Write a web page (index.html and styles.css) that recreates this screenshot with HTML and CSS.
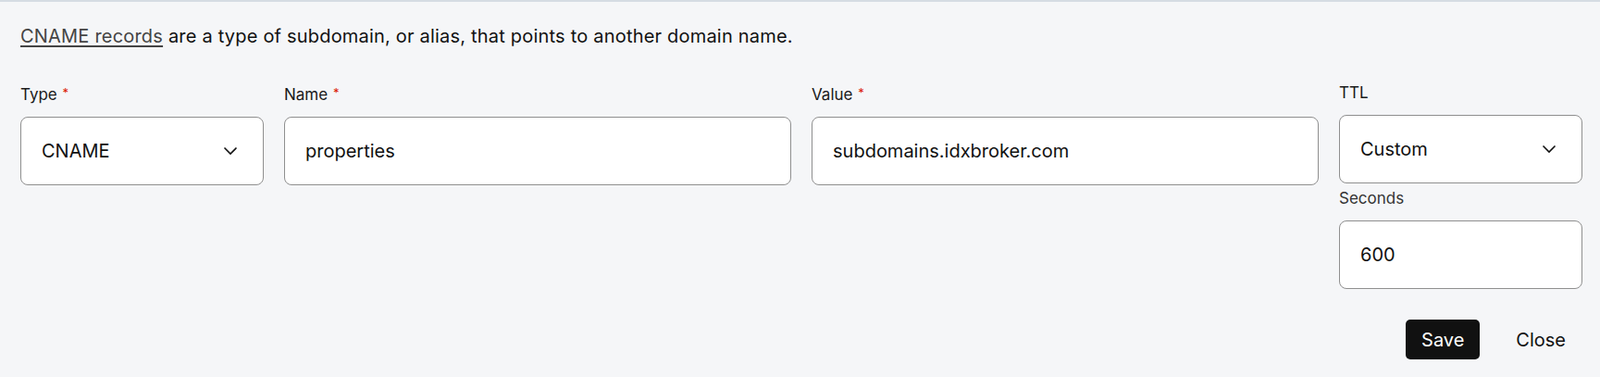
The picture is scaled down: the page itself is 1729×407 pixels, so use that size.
FILE: index.html
```html
<!DOCTYPE html>
<html lang="en">
<head>
  <meta charset="UTF-8" />
  <meta name="viewport" content="width=device-width, initial-scale=1.0"/>
  <title>Edit DNS record</title>
  <link rel="stylesheet" href="styles.css">
</head>
<body>
  <div class="record-form">
    <p class="intro"><a href="#">CNAME records</a> are a type of subdomain, or alias, that points to another domain name.</p>

    <div class="fields">
      <div class="field span-2">
        <label>Type <span class="req">*</span></label>
        <div class="select">
          <span>CNAME</span>
          <svg class="chevron" width="16" height="10" viewBox="0 0 16 10"><path d="M1.5 1.5 L8 8 L14.5 1.5" fill="none" stroke="#111" stroke-width="1.6"/></svg>
        </div>
      </div>

      <div class="field span-4">
        <label>Name <span class="req">*</span></label>
        <div class="input">properties</div>
      </div>

      <div class="field span-4">
        <label>Value <span class="req">*</span></label>
        <div class="input">subdomains.idxbroker.com</div>
      </div>

      <div class="field span-2">
        <label>TTL</label>
        <div class="select">
          <span>Custom</span>
          <svg class="chevron" width="16" height="10" viewBox="0 0 16 10"><path d="M1.5 1.5 L8 8 L14.5 1.5" fill="none" stroke="#111" stroke-width="1.6"/></svg>
        </div>
        <label class="sub-label">Seconds</label>
        <div class="input">600</div>
      </div>
    </div>

    <div class="actions">
      <button class="btn save">Save</button>
      <button class="btn close">Close</button>
    </div>
  </div>
</body>
</html>
```

FILE: styles.css
```css
body {
  margin: 0;
  font-family: 'Inter', 'Liberation Sans', sans-serif;
  background-color: #f5f6f8;
  color: #111;
}

.record-form {
  border-top: 2px solid #d5dce3;
  padding: 23px 20px 0 22px;
  height: 405px;
  box-sizing: border-box;
}

.intro {
  margin: 0;
  font-size: 20px;
  line-height: 28px;
  letter-spacing: 0.2px;
}

.intro a {
  color: #444;
  text-decoration: underline;
  text-underline-offset: 3px;
}

.fields {
  display: grid;
  grid-template-columns: repeat(12, 1fr);
  column-gap: 22px;
  margin-top: 35px;
  width: 1688px;
}

.span-2 {
  grid-column: span 2;
}

.span-4 {
  grid-column: span 4;
}

label {
  display: block;
  font-size: 17px;
  line-height: 24px;
  font-weight: 400;
  color: #1a1a1a;
  margin-bottom: 12px;
}

.req {
  color: #db1802;
  font-size: 13px;
  vertical-align: 3px;
  margin-left: 1px;
}

.sub-label {
  color: #333;
  margin: 4px 0 12px;
}

.input, .select {
  height: 74px;
  box-sizing: border-box;
  display: flex;
  align-items: center;
  padding: 0 22px;
  background: white;
  border: 1px solid #8f8f8f;
  border-radius: 8px;
  font-size: 20px;
}

.select {
  justify-content: space-between;
  padding-right: 27px;
}

.actions {
  display: flex;
  justify-content: flex-end;
  gap: 21px;
  margin-top: 33px;
  width: 1688px;
}

.btn {
  font-family: inherit;
  font-size: 20px;
  height: 43px;
  padding: 0 18px;
  border: none;
  border-radius: 5px;
  cursor: pointer;
}

.save {
  background-color: #111;
  color: white;
  min-width: 80px;
  padding: 0 17px;
}

.close {
  background: none;
  color: #111;
}
```
